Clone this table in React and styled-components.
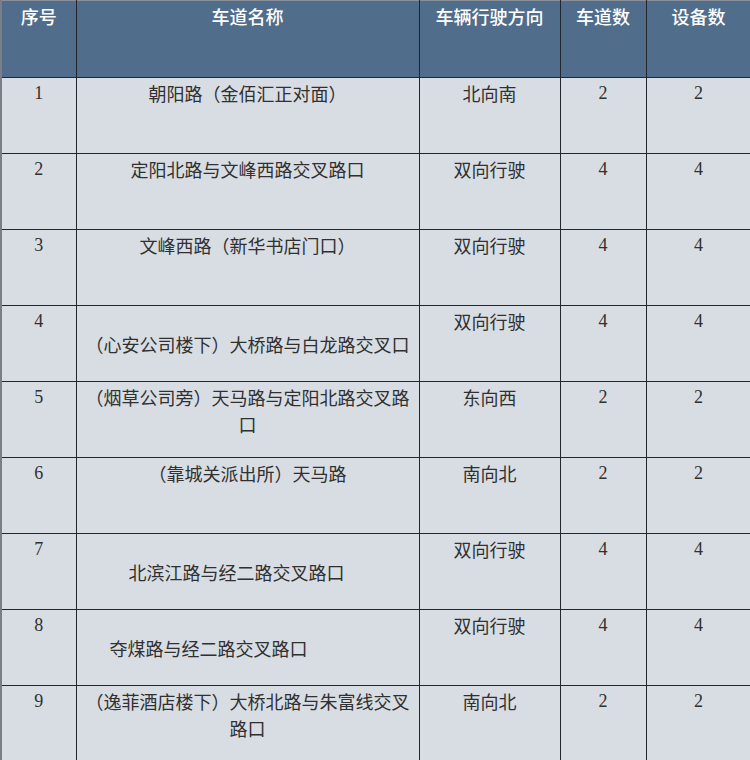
import styled, { createGlobalStyle } from "styled-components";

const GlobalStyle = createGlobalStyle`
  html, body {
    margin: 0;
    padding: 0;
    background: #d8dde4;
  }
`;

const Table = styled.table`
  width: 750px;
  border-collapse: collapse;
  table-layout: fixed;
  border-left: 2px solid #7a7f86;
  border-top: 1px solid #8a9098;
  font-size: 18px;
  line-height: 27px;
  text-spacing-trim: space-all;
  font-feature-settings: "chws" 0, "halt" 0, "palt" 0;
`;

const HeadCell = styled.th`
  height: 74px;
  padding: 2px 4px 0;
  background: #506e8c;
  color: #ffffff;
  font-family: "Noto Sans CJK SC", sans-serif;
  font-weight: 500;
  text-align: center;
  vertical-align: top;
  border: 1px solid #23272c;
  border-top: none;
`;

const Cell = styled.td`
  height: 73px;
  padding: 2px 4px 0;
  padding-right: ${(p) => 4 + (p.$shift || 0)}px;
  background: #d8dde4;
  color: #303030;
  text-align: center;
  vertical-align: ${(p) => (p.$middle ? "middle" : "top")};
  border: 1px solid #23272c;
  font-family: ${(p) =>
    p.$num ? '"Liberation Serif", serif' : '"Noto Sans CJK SC", sans-serif'};
  font-weight: 400;
`;

const rows = [
  { id: 1, name: "朝阳路（金佰汇正对面）", dir: "北向南", lanes: 2, dev: 2 },
  { id: 2, name: "定阳北路与文峰西路交叉路口", dir: "双向行驶", lanes: 4, dev: 4 },
  { id: 3, name: "文峰西路（新华书店门口）", dir: "双向行驶", lanes: 4, dev: 4 },
  { id: 4, name: "（心安公司楼下）大桥路与白龙路交叉口", dir: "双向行驶", lanes: 4, dev: 4, middle: true },
  { id: 5, name: "（烟草公司旁）天马路与定阳北路交叉路口", dir: "东向西", lanes: 2, dev: 2 },
  { id: 6, name: "（靠城关派出所）天马路", dir: "南向北", lanes: 2, dev: 2 },
  { id: 7, name: "北滨江路与经二路交叉路口", dir: "双向行驶", lanes: 4, dev: 4, middle: true, shift: 22 },
  { id: 8, name: "夺煤路与经二路交叉路口", dir: "双向行驶", lanes: 4, dev: 4, middle: true, shift: 78 },
  { id: 9, name: "（逸菲酒店楼下）大桥北路与朱富线交叉路口", dir: "南向北", lanes: 2, dev: 2 },
];

export default function App() {
  return (
    <>
      <GlobalStyle />
      <Table>
        <colgroup>
          <col style={{ width: 75 }} />
          <col style={{ width: 343 }} />
          <col style={{ width: 141 }} />
          <col style={{ width: 86 }} />
          <col style={{ width: 105 }} />
        </colgroup>
        <thead>
          <tr>
            <HeadCell>序号</HeadCell>
            <HeadCell>车道名称</HeadCell>
            <HeadCell>车辆行驶方向</HeadCell>
            <HeadCell>车道数</HeadCell>
            <HeadCell>设备数</HeadCell>
          </tr>
        </thead>
        <tbody>
          {rows.map((r) => (
            <tr key={r.id}>
              <Cell $num>{r.id}</Cell>
              <Cell $middle={r.middle} $shift={r.shift}>
                {r.name}
              </Cell>
              <Cell>{r.dir}</Cell>
              <Cell $num>{r.lanes}</Cell>
              <Cell $num>{r.dev}</Cell>
            </tr>
          ))}
        </tbody>
      </Table>
    </>
  );
}
